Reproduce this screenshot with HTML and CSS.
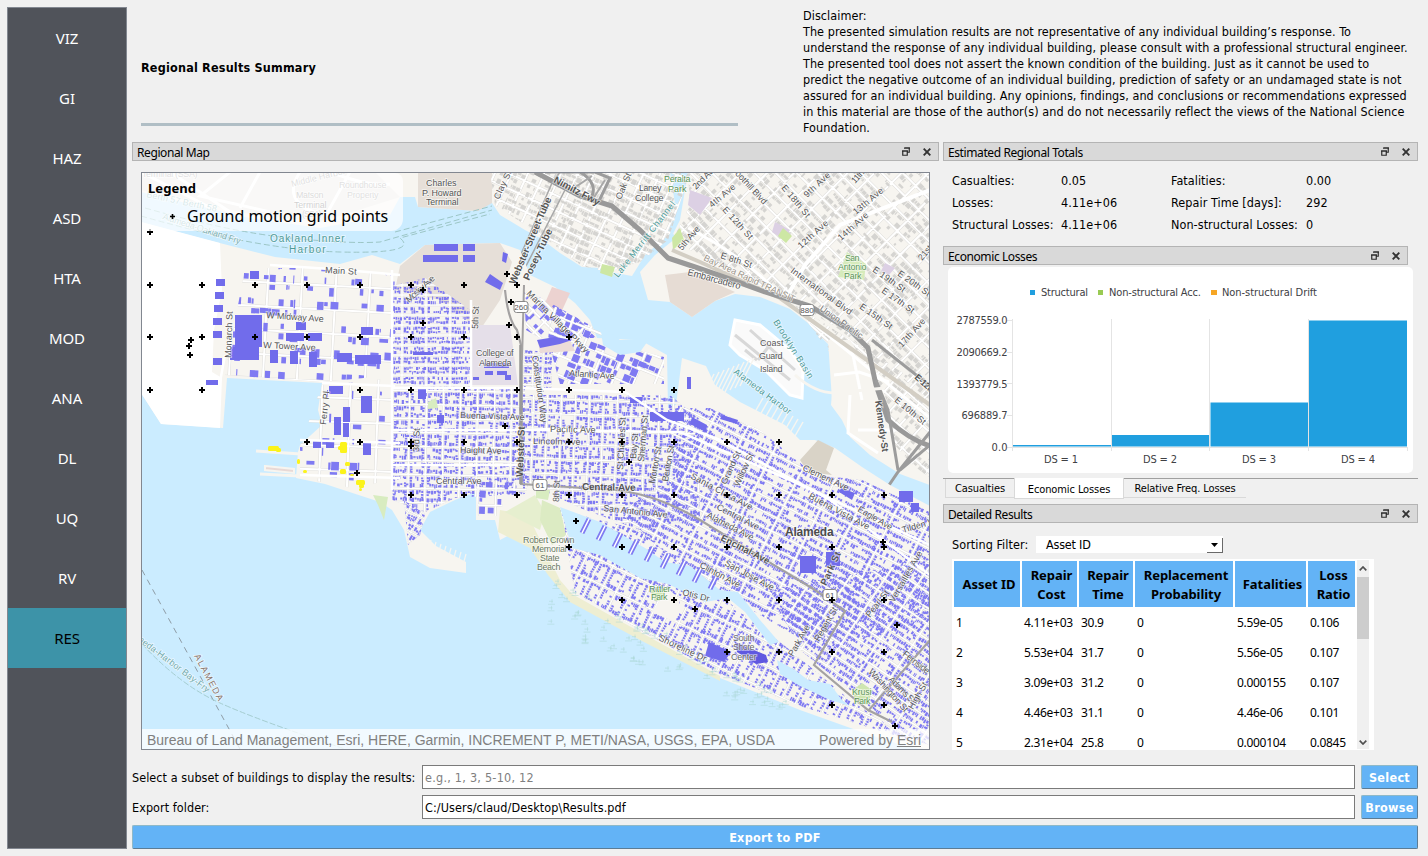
FILE: index.html
```html
<!DOCTYPE html>
<html lang="en">
<head>
<meta charset="utf-8">
<title>Regional Results Summary</title>
<link rel="stylesheet" href="styles.css">
</head>
<body>
<svg class="defs" width="0" height="0">
  <symbol id="float" viewBox="0 0 8 9"><path d="M2.75.75h4.5v4.5h-1.5M2 1.1h6M0 4.1h6M.75 3.75h4.5v4.5h-4.5z" fill="none" stroke="#2b2b2b" stroke-width="1.2"/></symbol>
  <symbol id="close" viewBox="0 0 8 8"><path d="M.7.7l6.6 6.6M7.3.7L.7 7.3" fill="none" stroke="#333" stroke-width="1.9"/></symbol>
</svg>
<div class="app">
  <nav class="side">
    <a>VIZ</a><a>GI</a><a>HAZ</a><a>ASD</a><a>HTA</a><a>MOD</a><a>ANA</a><a>DL</a><a>UQ</a><a>RV</a><a class="on">RES</a>
  </nav>
  <main class="main">
    <header class="head">
      <h1>Regional Results Summary</h1>
      <p class="disc">Disclaimer:<br>The presented simulation results are not representative of any individual building’s response. To<br>understand the response of any individual building, please consult with a professional structural engineer.<br>The presented tool does not assert the known condition of the building. Just as it cannot be used to<br>predict the negative outcome of an individual building, prediction of safety or an undamaged state is not<br>assured for an individual building. Any opinions, findings, and conclusions or recommendations expressed<br>in this material are those of the author(s) and do not necessarily reflect the views of the National Science<br>Foundation.</p>
    </header>
    <div class="cols">
      <section class="left">
        <div class="bar"><span>Regional Map</span><svg class="fl"><use href="#float"/></svg><svg class="cl"><use href="#close"/></svg></div>
        <div class="map">
          <svg id="map" width="787" height="576" viewBox="142 173 787 576"></svg>
          <div class="legend"><b>Legend</b><div class="lrow"><svg width="7" height="7"><path d="M3.5 1v5M1 3.5h5" stroke="#000" stroke-width="1.6"/></svg><span>Ground motion grid points</span></div></div>
          <div class="attr"><span>Bureau of Land Management, Esri, HERE, Garmin, INCREMENT P, METI/NASA, USGS, EPA, USDA</span><span>Powered by <u>Esri</u></span></div>
        </div>
      </section>
      <section class="right">
        <div class="bar"><span>Estimated Regional Totals</span><svg class="fl"><use href="#float"/></svg><svg class="cl"><use href="#close"/></svg></div>
        <div class="totals">
          <span>Casualties:</span><span>0.05</span><span>Fatalities:</span><span>0.00</span>
          <span>Losses:</span><span>4.11e+06</span><span>Repair Time [days]:</span><span>292</span>
          <span>Structural Losses:</span><span>4.11e+06</span><span>Non-structural Losses:</span><span>0</span>
        </div>
        <div class="bar short"><span>Economic Losses</span><svg class="fl"><use href="#float"/></svg><svg class="cl"><use href="#close"/></svg></div>
        <div class="chart">
          <svg width="465" height="206" viewBox="948 267 465 206">
            <g fill="#209fdf"><rect x="1030" y="290" width="5" height="5"/><rect x="1098" y="290" width="5" height="5" fill="#99ca53"/><rect x="1211" y="290" width="6" height="5" fill="#f6a625"/></g>
            <g class="ct"><text x="1041" y="296" textLength="47">Structural</text><text x="1109" y="296" textLength="92">Non-structural Acc.</text><text x="1222" y="296" textLength="95">Non-structural Drift</text></g>
            <g stroke="#e4e4e4"><path d="M1012.5 319v132M1007 320.5h5M1007 352.500h5M1007 383.500h5M1007 415.500h5M1007 447.500h401M1111.500 319v132M1209.500 319v132M1308.500 319v132M1407.500 447v4"/></g>
            <g fill="#209fdf"><rect x="1013" y="445" width="98" height="1.500"/><rect x="1112" y="435" width="97" height="11.500"/><rect x="1210.500" y="402.500" width="97.500" height="44"/><rect x="1309" y="320.500" width="98" height="126"/></g>
            <g class="ct" text-anchor="end"><text x="1007.500" y="324" textLength="51">2787559.0</text><text x="1007.500" y="356" textLength="51">2090669.2</text><text x="1007.500" y="388" textLength="51">1393779.5</text><text x="1007.500" y="419" textLength="46">696889.7</text><text x="1007.500" y="451" textLength="16">0.0</text></g>
            <g class="ct" text-anchor="middle"><text x="1061" y="463" textLength="34">DS = 1</text><text x="1160" y="463" textLength="34">DS = 2</text><text x="1259" y="463" textLength="34">DS = 3</text><text x="1358" y="463" textLength="34">DS = 4</text></g>
          </svg>
        </div>
        <div class="tabs"><span>Casualties</span><span class="sel">Economic Losses</span><span>Relative Freq. Losses</span></div>
        <div class="bar"><span>Detailed Results</span><svg class="fl"><use href="#float"/></svg><svg class="cl"><use href="#close"/></svg></div>
        <div class="filter"><label>Sorting Filter:</label><div class="combo"><span>Asset ID</span><i><svg width="7" height="4"><path d="M0 0h7L3.500 4z"/></svg></i></div></div>
        <div class="tbox">
          <div class="grid">
            <b>Asset ID</b><b>Repair<br>Cost</b><b>Repair<br>Time</b><b>Replacement<br>Probability</b><b>Fatalities</b><b>Loss<br>Ratio</b>
            <span>1</span><span>4.11e+03</span><span>30.9</span><span>0</span><span>5.59e-05</span><span>0.106</span>
            <span>2</span><span>5.53e+04</span><span>31.7</span><span>0</span><span>5.56e-05</span><span>0.107</span>
            <span>3</span><span>3.09e+03</span><span>31.2</span><span>0</span><span>0.000155</span><span>0.107</span>
            <span>4</span><span>4.46e+03</span><span>31.1</span><span>0</span><span>4.46e-06</span><span>0.101</span>
            <span>5</span><span>2.31e+04</span><span>25.8</span><span>0</span><span>0.000104</span><span>0.0845</span>
          </div>
          <div class="scroll"><svg width="8" height="5"><path d="M.7 4.300L4 1l3.300 3.300" fill="none" stroke="#505050" stroke-width="1.700"/></svg><i></i><svg class="dn" width="8" height="5"><path d="M.7.7L4 4 7.300.7" fill="none" stroke="#505050" stroke-width="1.700"/></svg></div>
        </div>
      </section>
    </div>
    <div class="form">
      <label>Select a subset of buildings to display the results:</label><div class="inp ph">e.g., 1, 3, 5-10, 12</div><div class="btn">Select</div>
      <label>Export folder:</label><div class="inp">C:/Users/claud/Desktop\Results.pdf</div><div class="btn">Browse</div>
      <div class="btn wide">Export to PDF</div>
    </div>
  </main>
</div>
<script src="map.js"></script>
</body>
</html>
```
FILE: styles.css
```css
* { box-sizing: border-box; }
body { margin: 0; background: #f0f0f0; color: #000; font: 12.5px/16px "DejaVu Sans Condensed", "DejaVu Sans", sans-serif; font-stretch: condensed; letter-spacing: .06px; }
.defs { display: block; }
.app { display: flex; height: 856px; padding: 7px 10px 7px 7px; gap: 5px; overflow: hidden; }
.side { width: 120px; flex: none; background: #50535a; border: 1px solid #828790; font: 15px "Noto Sans", sans-serif; letter-spacing: -0.1px; }
.side a { display: flex; height: 60px; align-items: center; justify-content: center; color: #fff; padding-bottom: 1px; }
.side .on { background: #3d93a8; color: #000; }
.main { flex: 1; min-width: 0; display: flex; flex-direction: column; }
.head { display: flex; justify-content: space-between; height: 135px; padding-left: 9px; }
.head h1 { width: 597px; height: 119px; margin: 0; padding-top: 53px; border-bottom: 3px solid #b0bec5; font-size: 12.5px; line-height: 16px; letter-spacing: .2px; }
.disc { width: 615px; margin: 1px 0 0; white-space: nowrap; }
.cols { display: flex; gap: 4px; height: 608px; }
.left { width: 807px; }
.right { width: 475px; }
.bar { height: 19px; display: flex; align-items: center; background: #d9d9d9; border: 1px solid #b4b4b4; padding: 2px 7px 0 4px; font: 12px/16px "Noto Sans", sans-serif; letter-spacing: -0.4px; }
.bar span { flex: 1; }
.bar svg { width: 8px; height: 8px; margin-top: -2px; }
.bar .fl { height: 9px; margin-right: 13px; }
.short { width: 465px; }
.map { position: relative; width: 789px; height: 578px; margin: 11px 0 0 9px; border: 1px solid #828790; overflow: hidden; background: #cbecff; }
.map > svg { display: block; }
.legend { position: absolute; left: 0; top: 0; width: 261px; height: 58px; padding: 6px 6px; background: rgba(255,255,255,.7); border-radius: 0 8px 12px 0; font: 13px/18px "Noto Sans", sans-serif; }
.lrow { display: flex; align-items: center; gap: 11px; padding: 8px 0 0 21px; font-size: 16px; line-height: 22px; letter-spacing: 0; white-space: nowrap; }
.attr { position: absolute; left: 0; right: 0; bottom: 0; height: 20px; padding: 0 8px 0 5px; display: flex; justify-content: space-between; background: rgba(255,255,255,.75); color: #808080; font: 14px/22px "Liberation Sans", sans-serif; letter-spacing: 0; }
.totals { display: grid; grid-template-columns: 109px 110px 135px 1fr; grid-auto-rows: 22px; line-height: 22px; padding: 9px 0 0 9px; height: 85px; white-space: nowrap; }
.chart { width: 465px; height: 206px; margin: 2px 0 5px 5px; background: #fff; border-radius: 5px; }
.chart svg { display: block; }
.ct { font: 11px "DejaVu Sans Condensed", "DejaVu Sans", sans-serif; fill: #404044; letter-spacing: 0; }
.tabs { display: flex; height: 26px; padding-left: 2px; border-top: 1px solid #a0a0a0; align-items: flex-start; font-size: 11px; line-height: 19px; letter-spacing: -.1px; }
.tabs span { height: 19px; border-bottom: 1px solid #d9d9d9; width: 69px; text-align: center; border-left: 1px solid #d9d9d9; }
.tabs .sel { width: 110px; height: 21px; margin-top: -1px; background: #fff; border: 1px solid #d9d9d9; border-top: 0; line-height: 23px; }
.tabs span:last-child { width: 122px; border-left: 0; }
.filter { display: flex; height: 36px; padding: 13px 0 0 9px; line-height: 18px; }
.filter label { width: 84px; }
.combo { width: 187px; height: 17px; background: #fff; display: flex; justify-content: space-between; padding-left: 10px; letter-spacing: -.2px; }
.combo i { width: 16px; height: 15px; margin-top: 2px; border: solid #696969; border-width: 0 1px 1px 0; display: flex; align-items: center; justify-content: center; }
.tbox { width: 422px; height: 191px; margin-left: 9px; background: #fff; display: flex; overflow: hidden; padding: 2px 5px 0 2px; }
.grid { display: grid; grid-template-columns: 66px 55px 54px 98px 71px 47px; column-gap: 2px; grid-template-rows: 46px repeat(5, 30px); width: 401px; flex: none; font: 12px/30px "Noto Sans", sans-serif; letter-spacing: -.3px; }
.grid b { display: flex; align-items: center; justify-content: center; text-align: center; background: #63b3f6; font-size: 13px; line-height: 19px; padding: 1px 0 0 4px; letter-spacing: -.05px; }
.grid span { padding: 1px 0 0 2px; }
.scroll { width: 12px; height: 189px; margin: -1px 0 0 2px; background: #f0f0f0; display: flex; flex-direction: column; align-items: center; padding-top: 6px; }
.scroll i { width: 12px; height: 62px; background: #cdcdcd; margin: 6px 0 101px; }
.form { display: grid; grid-template-columns: 290px 933px 63px; row-gap: 6px; grid-auto-rows: 24px; margin-top: 15px; line-height: 25px; }
.form label { white-space: nowrap; }
.inp { border: 1px solid #7a7a7a; background: #fff; padding-left: 2px; line-height: 24px; letter-spacing: .1px; }
.ph { color: #808080; letter-spacing: .25px; }
.btn { margin-left: 6px; background: #63b3f6; color: #fff; font-weight: bold; text-align: center; border: 1px solid #8fb9c8; border-right-color: #5c7c94; border-bottom-color: #5c7c94; border-radius: 2px; line-height: 23px; letter-spacing: .3px; }
.wide { grid-column: 1 / -1; margin-left: 0; }
.lbl { font-family: "Liberation Sans", sans-serif; letter-spacing: .4px; paint-order: stroke; stroke: rgba(255,255,255,.6); stroke-width: 1.6px; }
```
FILE: map.js
```js
const svg = document.getElementById('map');
let seed = 7;
const rnd = () => (seed = (seed * 16807) % 2147483647) / 2147483647;
const out = [];
const f = n => n.toFixed(1);
const poly = (p, fill, extra = '') => out.push(`<polygon points="${p}" fill="${fill}" ${extra}/>`);
const line = (d, c, w, extra = '') => out.push(`<path d="${d}" fill="none" stroke="${c}" stroke-width="${w}" ${extra}/>`);
let clipId = 0;

/* Street blocks filled with small building footprints, clipped to a district outline. */
function district(pts, angle, bw, bh, color, density, size, street) {
  const id = 'c' + clipId++;
  const nums = pts.split(/[ ,]+/).map(Number);
  const xs = nums.filter((_, i) => i % 2 === 0), ys = nums.filter((_, i) => i % 2);
  const cx = (Math.min(...xs) + Math.max(...xs)) / 2, cy = (Math.min(...ys) + Math.max(...ys)) / 2;
  const r = Math.hypot(Math.max(...xs) - cx, Math.max(...ys) - cy) + 10;
  let houses = '', roads = '';
  for (let y = -r; y < r; y += bh) { roads += `M${f(-r)} ${f(y)}H${f(r)}`; }
  for (let x = -r; x < r; x += bw) { roads += `M${f(x)} ${f(-r)}V${f(r)}`; }
  for (let y = -r; y < r; y += bh) for (let x = -r; x < r; x += bw) {
    for (const row of [y + 1.6, y + bh - 2.2 - size]) {
      let u = x + 1.8;
      while (u < x + bw - 2) {
        const w = size < 3.2 ? .9 + rnd() * 1.7 : 1 + rnd() * size * 1.3, h = size * (.6 + rnd() * .9);
        if (rnd() < density) houses += `M${f(u)} ${f(row + rnd())}h${f(w)}v${f(h)}h${f(-w)}z`;
        u += w + .6;
      }
    }
    if (size < 3.5) for (let v = y + 3; v < y + bh - 3; v += 2.6) for (const s of [x + 1.6, x + bw - 4])
      if (rnd() < density) houses += `M${f(s)} ${f(v)}h${f(2 + rnd())}v1.8h-2.2z`;
  }
  out.push(`<clipPath id="${id}"><polygon points="${pts}"/></clipPath><g clip-path="url(#${id})"><g transform="translate(${cx} ${cy}) rotate(${angle})"><path d="${roads}" stroke="#dddcd9" stroke-width="${street + .9}" fill="none"/><path d="${roads}" stroke="#fff" stroke-width="${street}" fill="none"/><path d="${houses}" fill="${color}"/></g></g>`);
}
const B = '#7f7af2', G = '#d5d4d1', LAND = '#f7f5f0', WATER = '#cbecff';

/* Oakland */
poly('141,172 930,172 930,485 900,474 870,455 850,437 842,420 831,405 833,380 829,345 820,336 808,323 790,309 760,297 735,294 715,301 692,317 670,302 648,300 640,272 655,255 676,238 672,232 645,255 632,276 610,272 600,268 582,267 560,253 540,238 525,230 500,215 492,203 482,200 478,211 418,207 415,197 400,197 390,215 320,228 250,218 190,204 141,192', LAND);
poly('141,172 375,172 400,197 320,222 250,214 141,190', '#e9e6e3');
poly('418,172 492,172 492,203 478,211 418,207', '#e6dfd8');
poly('670,302 692,317 715,301 735,292 690,272 665,275', '#e6dcd4');
poly('670,172 688,172 680,220 672,236 667,230 676,210', WATER);
district('490,172 690,172 668,240 640,262 608,272 582,266 545,238 495,205', 25, 15, 14, G, .75, 3.500, 2);
district('688,172 930,172 930,400 840,330 800,305 730,270 690,250 675,235 690,205', 45, 19, 15, G, .62, 3.6, 2);
district('795,305 930,390 930,478 880,440 850,380', 42, 17, 15, G, .55, 3.500, 2);
poly('828,340 850,340 885,395 895,445 925,480 900,472 870,453 852,430 840,412 832,400', LAND);
line('M834 375l25-3 30 10M852 350l10 50M850 395l-2 38 30 20M858 430h40', '#fff', 3);
poly('847,252 866,264 864,280 838,277', '#d6ebbb'); poly('672,238 680,228 684,240 673,250', '#cde7a4');
poly('690,190 712,198 700,215 688,205', '#dcd0e4'); poly('775,222 790,230 784,240 772,232', '#dcd0e4'); poly('783,228 792,236 786,243 778,236', '#cde7a4');
poly('602,264 615,267 612,277 600,273', '#cde7a4'); poly('885,263 895,268 889,275 881,271', '#dcd0e4');
line('M688 228q60 30 100 75l142 115', '#fff', 3); line('M930 190L840 225 805 265 785 300', '#fff', 4);
line('M672 250L700 262 780 298 930 405', '#d3cec4', 4);
line('M535 172L580 196 612 206 640 230 668 258Q720 275 765 292L810 306 850 330 868 348 876 385 888 420Q910 440 930 446', '#999', 5);
line('M872 340L930 386M930 432L898 472 830 572M876 380l12 30 10 60M930 445l-30 25M580 172q20 12 10 28M545 172h50l15 6-12 25', '#9c9c9c', 3);
line('M552 183L515 268M566 188L524 270M552 183L560 172', '#a8a8a8', 1.500);
line('M592 176L568 192M605 180l-14 22', '#a8a8a8', 2);
line('M141 172l70 36M170 172l60 40M230 172l-30 24 70 16M260 172l-20 36M300 172q-20 30 20 42M330 172q40 15 60 12M350 172l-25 45', '#fff', 3);
line('M145 208Q230 232 290 238T380 242 L492 210M141 216 Q260 250 340 252T400 238L490 214M395 232L492 206', '#9cc6c6', 1, 'stroke-dasharray="6 3"');

/* Alameda island */
poly('141,222 200,238 275,257 340,264 372,255 400,264 425,245 500,243 520,250 530,275 555,287 575,303 590,320 597,338 640,340 667,355 668,408 676,405 682,358 706,366 715,385 740,402 785,425 800,440 815,440 835,448 862,467 890,485 930,506 930,750 905,746 870,735 800,710 720,678 640,636 575,600 560,586 540,560 528,525 500,540 495,520 476,520 476,492 455,500 430,512 420,530 436,546 466,562 466,573 430,568 410,557 404,530 392,510 380,502 325,484 296,478 298,452 300,445 322,425 318,410 322,383 227,378 223,428 161,424 141,393', LAND);
poly('141,222 220,243 222,290 214,330 212,372 222,378 220,428 161,424 141,393', '#fff');
poly('425,245 500,243 512,262 500,300 480,330 440,300 395,290 400,266', '#e6dfd8');
poly('552,287 570,293 560,315 545,303', '#ecd2d0');
poly('471,325 510,325 518,385 471,385', '#e5dfe9');
poly('735,320 760,325 790,350 803,370 802,398 790,395 765,370 740,355 730,345', '#fafafa', 'stroke="#fff" stroke-width="3"');
line('M735 335l55 45M750 330l45 40M745 350l12 10M770 345l-12 15', '#d8d8d8', 3);
line('M795 375q20 18 40 18l50-5', LAND, 3);
poly('818,440 834,448 826,470 832,475 808,472 800,460', '#d9d3c7');

district('245,268 330,268 395,275 395,375 322,382 225,375', 3, 34, 24, B, .3, 6, 2);
district('322,385 395,378 392,480 352,488 300,478 300,446', 2, 28, 24, B, .16, 6, 2);
district('392,286 425,278 470,310 472,388 392,385', 0, 24, 10, B, .78, 2.300, 1.500);
district('392,388 525,388 525,494 455,498 425,512 392,500', 1, 17, 14, B, .72, 2.800, 1.500);
district('522,350 552,352 552,388 522,388', 2, 10, 10, B, .8, 2, 1);
district('524,290 545,300 590,325 596,338 540,338 526,330', 45, 16, 14, B, .35, 5, 2);
district('552,305 590,325 620,345 664,357 664,384 560,384 548,340', 22, 20, 18, B, .5, 5.500, 2);
district('522,395 670,395 700,420 700,520 640,530 580,508 522,480', 2, 14, 15, B, .74, 2.600, 1.300);
district('668,408 710,408 760,430 815,475 862,480 930,512 930,620 820,650 700,580 640,532 620,512 670,480', 27, 34, 14, B, .76, 2.800, 1.500);
district('560,510 640,530 700,580 790,650 850,700 910,740 800,706 720,674 640,630 575,592', 26, 14, 22, B, .74, 3, 1.300);
district('770,590 930,560 930,745 905,738 850,690 800,650', 34, 30, 13, B, .76, 2.800, 1.500);
district('404,500 425,514 420,535 408,545', 28, 12, 9, B, .7, 2.500, 1);
district('476,478 528,484 526,492 505,494 500,516 478,516', 2, 18, 17, B, .5, 5, 1.5);

/* Large buildings */
const big = [[235,315,27,32],[230,347,29,13],[270,350,8,13],[290,351,8,13],[309,352,8,15],[286,333,18,8],[308,333,14,8],[337,353,15,9],[355,355,26,9],[361,396,11,17],[343,407,7,15],[334,417,7,18],[343,423,6,14],[363,443,8,12],[313,441,8,7],[326,442,8,6],[329,386,14,8],[434,244,24,7],[463,244,12,7],[423,255,35,7],[463,255,12,7],[216,279,9,7],[215,292,9,7],[214,305,9,7],[213,318,9,7],[213,331,9,7],[213,358,9,7],[250,271,9,8],[361,327,12,8],[296,322,10,8],[206,380,12,5],[650,412,34,9],[687,377,4,12],[899,491,14,11],[911,503,8,9],[800,556,16,17],[826,552,14,14],[484,363,25,5],[485,371,8,4],[497,371,10,4],[505,375,6,5],[473,377,6,3],[630,397,12,6],[418,389,8,10],[437,415,7,8],[413,352,20,3]];
out.push('<g fill="#716ceb">' + big.map(b => `<rect x="${b[0]}" y="${b[1]}" width="${b[2]}" height="${b[3]}"/>`).join('') + '</g>');
poly('490,274 503,283 500,290 485,282', '#716ceb'); poly('503,252 508,254 506,263 502,261', '#716ceb');
poly('735,642 766,655 768,662 756,664 737,652', '#5f58e0'); poly('709,642 731,652 724,662 705,656', '#716ceb'); poly('692,417 707,425 706,432 690,424', '#716ceb'); poly('722,415 738,420 737,424 720,419', '#716ceb'); poly('841,488 855,493 852,500 839,492', '#716ceb');
poly('538,341 570,341 575,351 540,353', '#ecdcd8'); poly('537,340 555,337 572,340 560,344 540,348', '#716ceb');

/* Lagoons, parks, beaches */
poly('560,507 600,522 645,548 665,562 690,566 720,590 738,592 760,620 779,642 770,645 745,612 728,598 705,602 668,584 640,578 600,555 572,548', WATER);
for (let i = 0; i < 9; i++) { line(`M${582 + i * 16} ${533 + i * 7}l7 -14`, B, 5); line(`M${582 + i * 16} ${533 + i * 7}l7 -14`, '#fff', 1.6); }
poly('777,660 795,670 808,680 830,684 842,700 850,706 830,700 800,686 780,674', WATER);
poly('600,325 620,340 650,338 640,352 620,355 603,345', WATER);
poly('500,510 528,515 545,550 560,580 572,594 640,632 720,676 720,681 640,640 570,602 548,575 530,548 498,532', '#eeeed2');
poly('505,512 535,495 545,512 540,530 520,520', '#e6efcf'); poly('542,500 560,508 566,535 552,545 540,520', '#dcebc3');
poly('650,590 670,588 670,600 655,601', '#cfe6b0'); poly('668,588 680,600 675,622 652,612', LAND);
poly('853,690 862,683 872,690 868,705 855,703', '#cfe6b0'); poly('428,402 436,398 438,408 428,409', '#d8ecc0'); poly('536,490 550,490 548,500 536,498', '#d8ecc0'); poly('373,495 388,497 384,520 378,505', '#d8ecc0');
poly('265,466 294,469 294,473 265,470', '#e8d9d6', 'stroke="#f7f5f0" stroke-width="2"');
line('M256 451l45 3M260 474l60 3', '#f7f5f0', 3);
for (let i = 0; i < 9; i++) { line(`M${700 + i * 5} ${402 - i * 2}l14-28`, LAND, 1.500); line(`M${755 + i * 5} ${412 + i * 3}l8-14`, LAND, 1.500); }
for (let i = 0; i < 8; i++) line(`M${428 + i * 5} ${551 + i * 2}l3-11`, LAND, 1.200);
for (let i = 0; i < 75; i++) { const t = rnd(), x = 542 + t * 240, y = 575 + t * 122 + rnd() * 55 * (1 - t * .6); line(`M${f(x)} ${f(y)}h7m-6 -3h4m-1 -2v4`, '#a9d7d3', .8, 'opacity=".6"'); }

/* Main roads */
line('M392 388H522L625 392 667 420 720 440 830 500 930 575M392 430H540L680 432 790 480 930 545M392 465H520', '#fff', 2.5);
line('M392 270V490M471 300V388M225 355L212 425M270 265q80 5 130 10M395 386L322 383M300 440L400 443M300 475L400 478', '#fff', 2.500);
line('M505 290Q508 320 517 330L521 345V484L600 489Q650 490 700 520L815 590 845 611 814 665 868 710 892 722', '#a4a2a2', 2.200);
line('M521 345V484', '#999', 3.500); line('M524 285L522 360', '#a4a2a2', 2); line('M868 711L930 640', '#a4a2a2', 2);
line('M142 570L240 749', '#8e9ca6', 1, 'stroke-dasharray="6 5"');
line('M142 644Q180 685 220 703T345 749', '#a5cdd0', 1, 'stroke-dasharray="6 2"');

/* Selected assets */
out.push('<g fill="#fbf31b">' + [[268,446,11,5],[276,448,5,4],[340,442,7,11],[338,446,5,4],[340,469,6,5],[345,462,5,4],[356,480,9,5],[359,484,5,4],[350,474,4,2],[297,459,3,5],[303,470,4,3],[359,488,3,3]].map(b => `<rect x="${b[0]}" y="${b[1]}" width="${b[2]}" height="${b[3]}" rx="1.500"/>`).join('') + '</g>');

/* Labels: text, x, y, rotation, size, colour, rendered length */
const D = '#555', T = '#4d9a98', P = '#5a9455';
[['Terminal (SSA)',142,177,0,9,'#999',56],['Middle Harbor',292,187,-14,9,'#999',56],['Roundhouse',339,188,0,9,'#999',48],['Property',347,198,0,9,'#999',32],['Matson',296,198,0,9,'#888',28],['Terminal',294,208,0,9,'#666',33],['(SSA)',302,217,0,9,'#888',20],['Berth 57 Berth 58',146,197,12,9,'#7fb5b9',72],['Alameda-Oakland Fry',162,219,18,9,'#7eafb0',82],
['Oakland Inner',270,242,0,10,T,75],['Harbor',289,253,0,10,T,37],['Main St',325,273,3,9,D,32],['W Midway Ave',266,318,4,9,D,58],['W Tower Ave',263,348,3,9,D,53],['Monarch St',231,358,-88,9,D,47],['Ferry Pl',326,425,-84,9,D,34],['Mosley Ave',409,303,-42,9,D,36],
['Charles',426,186,0,9,D,31],['P. Howard',422,196,0,9,D,40],['Terminal',426,205,0,9,D,33],['Clay St',499,200,-65,9,D,31],['Nimitz Fwy',553,182,28,10,D,51,1],['Webster-Street-Tube',515,285,-67,10,'#555',94,1],['Posey-Tube',529,281,-65,10,'#555',56,1],['Oak St',621,200,-68,9,D,28],['Laney',639,191,0,9,D,23],['College',635,201,0,9,D,29],['Peralta',664,182,0,9,P,27],['Park',668,192,0,9,P,19],['Lake Merritt Channel',618,278,-52,9,T,94],
['2nd Ave',696,190,-45,9,D,30],['4th Ave',712,208,-40,9,D,32],['Foothill Blvd',731,170,47,9,D,48],['E 18th St',781,188,50,9,D,40],['E 12th St',722,210,48,9,D,41],['9th Ave',807,198,-43,9,D,33],['11th Ave',855,184,-48,9,D,30],['13th Ave',856,215,-40,9,D,37],['12th Ave',801,249,-42,9,D,38],['14th Ave',841,241,-42,9,D,38],['5th Ave',682,251,-50,9,D,29],['E 8th St',720,258,18,9,D,33],['Bay Area Rapid TRANSIT',703,260,25,9,'#9a9388',100],['Embarcadero',687,275,15,9.500,D,55],['International Blvd',790,272,36,9,D,74],['Union Pacific',819,310,35,9,'#777',51],['San',845,261,0,9,P,15],['Antonio',838,270,0,9,P,29],['Park',844,279,0,9,P,18],['E 19th St',872,271,35,9,D,38],['E 20th St',897,275,35,9,D,38],['E 17th St',881,292,35,9,D,38],['E 15th St',859,308,35,9,D,38],['21st Ave',922,261,-50,9,D,34],['17th Ave',902,348,-48,9,D,36],
['Brooklyn Basin',773,322,58,9,T,68],['Alameda Harbor',733,373,37,9,T,70],['Coast',760,346,0,9,D,24],['Guard',759,359,0,9,D,24],['Island',760,372,0,9,D,23],['Kennedy-St',875,401,82,9.500,D,52,1],['E-12th St',914,378,42,9,D,35,1],['E 10th St',894,401,40,9,D,38],['5th St',478,329,-88,9,D,23],['Marina Village Pkwy',526,294,45,9,D,84],['College of',476,356,0,9,D,38],['Alameda',479,366,0,9,D,33],['Atlantic Ave',569,376,4,9,D,46],['Constitution Way',532,356,82,9,D,68],['Buena Vista Ave',460,418,2,9,D,65],['Pacific Ave',550,432,1,9,D,46],['Lincoln Ave',533,444,1,9,D,48],['Haight Ave',460,453,1,9,D,42],['Central Ave',436,484,0,9,D,46],['Webster St',523,477,-88,10,D,51,1],['3rd St',419,452,-88,9,D,24],['8th St',559,502,-88,9,D,22],['Central-Ave',582,490,1,10,D,54,1],['San Antonio Ave',603,511,6,9,D,65],['St Charles St',623,470,-87,9,D,53],['Bay St',636,459,-85,9,D,26],['Sherman St',644,462,-85,9,D,47],['Morton St',655,484,-80,9,D,38],['Benton St',668,482,-80,9,D,37],['Santa Clara Ave',690,478,28,9,D,69],['Central Ave',716,509,27,9,D,47],['Alameda Ave',706,517,27,9,D,52],['Encinal-Ave',720,540,27,9.500,D,54,1],['Clement Ave',802,470,25,9,D,50],['Buena Vista Ave',808,498,28,9,D,68],['Eagle Ave',857,511,30,9,D,39],['Tilden Way',903,533,-16,9,D,45],['Grand St',726,485,-65,9,D,36],['Willow St',739,487,-65,9,D,36],['Alameda',785,536,0,12,'#4b4b4b',49,1],
['Robert Crown',523,543,0,9,'#68775f',52],['Memorial',532,552,0,9,'#68775f',35],['State',540,561,0,9,'#68775f',20],['Beach',537,570,0,9,'#68775f',24],['Rittler',649,592,0,9,P,22],['Park',651,600,0,9,P,17],['Otis Dr',682,595,14,9,D,28],['Clinton Ave',699,567,28,9,D,45],['San Jose Ave',724,565,28,9,D,55],['Shoreline Dr',658,640,25,9,D,52],['South',733,641,0,9,'#666',22],['Shore',733,650,0,9,'#666',22],['Center',731,660,0,9,'#666',26],['Park St',826,586,-65,9.500,D,36,1],['Park Ave',793,657,-60,9,D,35],['Regent St',819,642,-60,9,D,38],['Pearl St',870,618,-52,9,D,32],['Versailles Ave',894,603,-60,9,D,58],['Fernside',902,655,38,9,D,32],['Washington St',868,672,48,9,D,55],['Adams St',888,680,45,9,D,34],['High St',913,710,-60,9,D,30],['Krusi',852,695,0,9,P,20],['Park',854,704,0,9,P,17],
['ALAMEDA',194,656,62,9,'#8a756c',52],['Alameda-Harbor Bay-Fry',125,631,37,9,'#73aaac',103]
].forEach(l => out.push(`<text class="lbl" x="${l[1]}" y="${l[2]}" transform="rotate(${l[3]} ${l[1]} ${l[2]})" font-size="${l[4]}" fill="${l[5]}" textLength="${l[6]}" ${l[7] ? 'font-weight="bold"' : ''}>${l[0]}</text>`));
[[521,307,'260'],[540,485,'61'],[830,595,'61'],[807,310,'880']].forEach(s => out.push(`<rect x="${s[0] - 7}" y="${s[1] - 5.500}" width="14" height="11" rx="2.500" fill="#fff" stroke="#888"/><text x="${s[0]}" y="${s[1] + 3}" text-anchor="middle" font-family="Liberation Sans, sans-serif" font-size="8" letter-spacing="0" fill="#555">${s[2]}</text>`));

/* Ground motion grid points */
const X = [150,202,255,307,360,411,464,517,569,622,674,727,779,832,884];
const rows = [[232,0,0],[285,0,7],[337,0,8],[390,0,1],[390,4,10],[442,3,3],[442,5,12],[495,5,14],[547,8,14],[600,9,14],[652,11,14],[705,13,14]];
const pts = [[360,442],[191,340],[189,346],[190,355],[423,290],[423,323],[507,274],[511,302],[509,325],[505,426],[411,446],[357,473],[629,462],[576,521],[883,542],[695,609],[897,625],[895,726]];
rows.forEach(([y, a, b]) => { for (let i = a; i <= b; i++) pts.push([X[i], y]); });
line(pts.map(([x, y]) => `M${x - 3} ${y}h6M${x} ${y - 3}v6`).join(''), '#000', 2);
svg.innerHTML = out.join('');
```
